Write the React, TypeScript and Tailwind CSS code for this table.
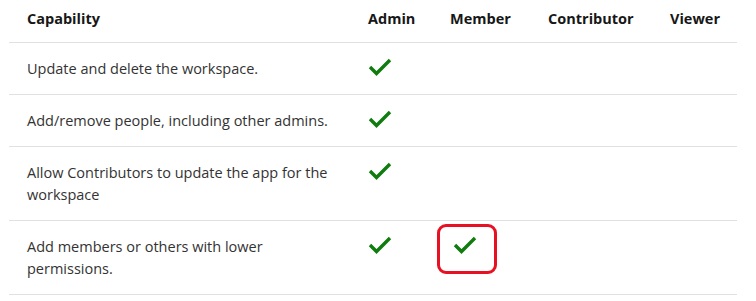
import React from "react";

function Check() {
  return (
    <svg width="24" height="20" viewBox="0 0 24 20" className="block">
      <path d="M2 9 L8.5 15.5 L22 2" fill="none" stroke="#107c10" strokeWidth="3.4" strokeLinecap="butt" strokeLinejoin="miter" />
    </svg>
  );
}

const rows: { text: React.ReactNode; admin: boolean; member: boolean }[] = [
  { text: "Update and delete the workspace.", admin: true, member: false },
  { text: "Add/remove people, including other admins.", admin: true, member: false },
  { text: "Allow Contributors to update the app for the workspace", admin: true, member: false },
  { text: "Add members or others with lower permissions.", admin: true, member: true },
];

export default function App() {
  return (
    <div className="w-[756px] h-[301px] bg-white overflow-hidden" style={{ fontFamily: '"Open Sans", "Noto Sans", sans-serif' }}>
      <div className="pl-[9px] pr-[19px]">
        <table className="w-[728px] border-collapse table-fixed text-[14.5px] text-[#171717]">
          <colgroup>
            <col className="w-[341px]" />
            <col className="w-[82px]" />
            <col className="w-[98px]" />
            <col className="w-[122px]" />
            <col className="w-[85px]" />
          </colgroup>
          <thead>
            <tr className="border-b border-[#e1e1e1]">
              <th className="text-left font-bold pl-[18px] h-[42px] pb-[4px] align-middle">Capability</th>
              <th className="text-left font-bold pl-[18px] align-middle pb-[4px]">Admin</th>
              <th className="text-left font-bold pl-[18px] align-middle pb-[4px]">Member</th>
              <th className="text-left font-bold pl-[18px] align-middle pb-[4px]">Contributor</th>
              <th className="text-left font-bold pl-[18px] align-middle pb-[4px]">Viewer</th>
            </tr>
          </thead>
          <tbody>
            {rows.map((r, i) => (
              <tr key={i} className="border-b border-[#e1e1e1] align-top">
                <td className="pl-[18px] pr-[12px] pt-[15px] pb-[14px] leading-[22px] text-[#333333]">{r.text}</td>
                <td className="pl-[18px] pt-[15px]">{r.admin && <Check />}</td>
                <td className="pl-[21px] pt-[15px]">
                  {r.member && (
                    <div className="relative w-[24px] h-[20px]">
                      <Check />
                      <div className="absolute left-[-16px] top-[-12px] w-[60px] h-[50px] border-[3px] border-[#e81123] rounded-[9px]" />
                    </div>
                  )}
                </td>
                <td></td>
                <td></td>
              </tr>
            ))}
          </tbody>
        </table>
      </div>
    </div>
  );
}
